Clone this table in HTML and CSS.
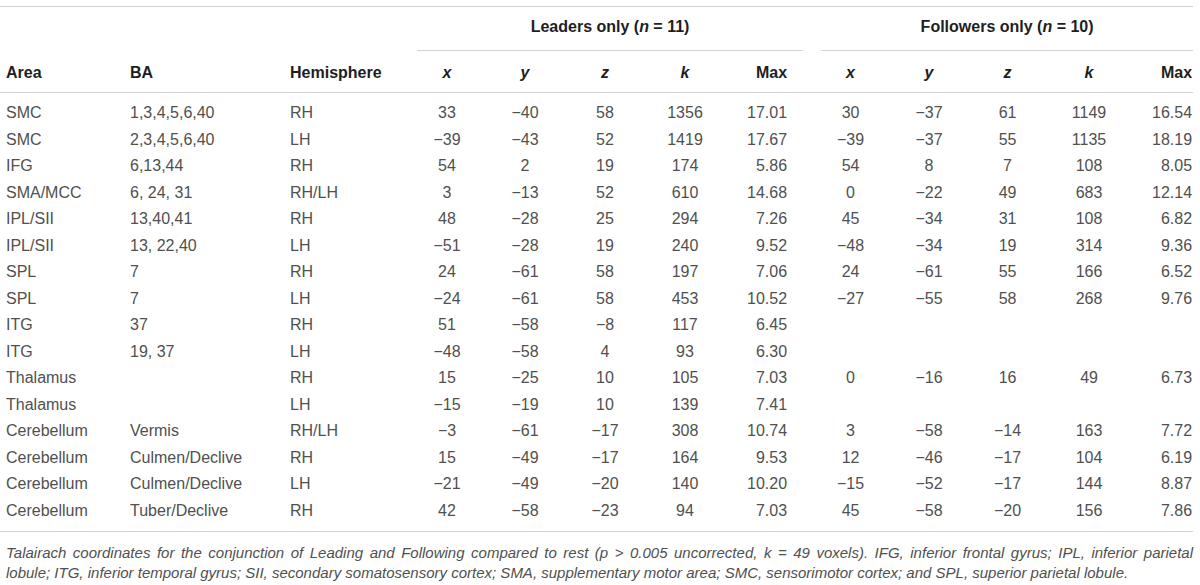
FILE: index.html
```html
<!DOCTYPE html>
<html lang="en">
<head>
<meta charset="utf-8">
<title>Talairach coordinates table</title>
<link rel="stylesheet" href="styles.css">
</head>
<body>
<div class="wrap">
<table class="tbl">
<colgroup>
<col class="c-area"><col class="c-ba"><col class="c-hem">
<col class="c-l1"><col class="c-l2"><col class="c-l3"><col class="c-l4"><col class="c-l5">
<col class="c-f1"><col class="c-f2"><col class="c-f3"><col class="c-f4"><col class="c-f5">
</colgroup>
<thead>
<tr class="grp">
<th colspan="3"></th>
<th colspan="5"><div class="grp-label grp-lead">Leaders only (<i>n</i> = 11)</div></th>
<th colspan="5"><div class="grp-label grp-foll">Followers only (<i>n</i> = 10)</div></th>
</tr>
<tr class="cols">
<th class="txt first">Area</th><th class="txt">BA</th><th class="txt">Hemisphere</th>
<th><i>x</i></th><th><i>y</i></th><th><i>z</i></th><th><i>k</i></th><th class="mx ml">Max</th>
<th><i>x</i></th><th><i>y</i></th><th><i>z</i></th><th><i>k</i></th><th class="mx mf">Max</th>
</tr>
</thead>
<tbody>
<tr><td class="txt first">SMC</td><td class="txt">1,3,4,5,6,40</td><td class="txt">RH</td><td>33</td><td>&minus;40</td><td>58</td><td>1356</td><td class="mx ml">17.01</td><td>30</td><td>&minus;37</td><td>61</td><td>1149</td><td class="mx mf">16.54</td></tr>
<tr><td class="txt first">SMC</td><td class="txt">2,3,4,5,6,40</td><td class="txt">LH</td><td>&minus;39</td><td>&minus;43</td><td>52</td><td>1419</td><td class="mx ml">17.67</td><td>&minus;39</td><td>&minus;37</td><td>55</td><td>1135</td><td class="mx mf">18.19</td></tr>
<tr><td class="txt first">IFG</td><td class="txt">6,13,44</td><td class="txt">RH</td><td>54</td><td>2</td><td>19</td><td>174</td><td class="mx ml">5.86</td><td>54</td><td>8</td><td>7</td><td>108</td><td class="mx mf">8.05</td></tr>
<tr><td class="txt first">SMA/MCC</td><td class="txt">6, 24, 31</td><td class="txt">RH/LH</td><td>3</td><td>&minus;13</td><td>52</td><td>610</td><td class="mx ml">14.68</td><td>0</td><td>&minus;22</td><td>49</td><td>683</td><td class="mx mf">12.14</td></tr>
<tr><td class="txt first">IPL/SII</td><td class="txt">13,40,41</td><td class="txt">RH</td><td>48</td><td>&minus;28</td><td>25</td><td>294</td><td class="mx ml">7.26</td><td>45</td><td>&minus;34</td><td>31</td><td>108</td><td class="mx mf">6.82</td></tr>
<tr><td class="txt first">IPL/SII</td><td class="txt">13, 22,40</td><td class="txt">LH</td><td>&minus;51</td><td>&minus;28</td><td>19</td><td>240</td><td class="mx ml">9.52</td><td>&minus;48</td><td>&minus;34</td><td>19</td><td>314</td><td class="mx mf">9.36</td></tr>
<tr><td class="txt first">SPL</td><td class="txt">7</td><td class="txt">RH</td><td>24</td><td>&minus;61</td><td>58</td><td>197</td><td class="mx ml">7.06</td><td>24</td><td>&minus;61</td><td>55</td><td>166</td><td class="mx mf">6.52</td></tr>
<tr><td class="txt first">SPL</td><td class="txt">7</td><td class="txt">LH</td><td>&minus;24</td><td>&minus;61</td><td>58</td><td>453</td><td class="mx ml">10.52</td><td>&minus;27</td><td>&minus;55</td><td>58</td><td>268</td><td class="mx mf">9.76</td></tr>
<tr><td class="txt first">ITG</td><td class="txt">37</td><td class="txt">RH</td><td>51</td><td>&minus;58</td><td>&minus;8</td><td>117</td><td class="mx ml">6.45</td><td></td><td></td><td></td><td></td><td class="mx mf"></td></tr>
<tr><td class="txt first">ITG</td><td class="txt">19, 37</td><td class="txt">LH</td><td>&minus;48</td><td>&minus;58</td><td>4</td><td>93</td><td class="mx ml">6.30</td><td></td><td></td><td></td><td></td><td class="mx mf"></td></tr>
<tr><td class="txt first">Thalamus</td><td class="txt"></td><td class="txt">RH</td><td>15</td><td>&minus;25</td><td>10</td><td>105</td><td class="mx ml">7.03</td><td>0</td><td>&minus;16</td><td>16</td><td>49</td><td class="mx mf">6.73</td></tr>
<tr><td class="txt first">Thalamus</td><td class="txt"></td><td class="txt">LH</td><td>&minus;15</td><td>&minus;19</td><td>10</td><td>139</td><td class="mx ml">7.41</td><td></td><td></td><td></td><td></td><td class="mx mf"></td></tr>
<tr><td class="txt first">Cerebellum</td><td class="txt">Vermis</td><td class="txt">RH/LH</td><td>&minus;3</td><td>&minus;61</td><td>&minus;17</td><td>308</td><td class="mx ml">10.74</td><td>3</td><td>&minus;58</td><td>&minus;14</td><td>163</td><td class="mx mf">7.72</td></tr>
<tr><td class="txt first">Cerebellum</td><td class="txt">Culmen/Declive</td><td class="txt">RH</td><td>15</td><td>&minus;49</td><td>&minus;17</td><td>164</td><td class="mx ml">9.53</td><td>12</td><td>&minus;46</td><td>&minus;17</td><td>104</td><td class="mx mf">6.19</td></tr>
<tr><td class="txt first">Cerebellum</td><td class="txt">Culmen/Declive</td><td class="txt">LH</td><td>&minus;21</td><td>&minus;49</td><td>&minus;20</td><td>140</td><td class="mx ml">10.20</td><td>&minus;15</td><td>&minus;52</td><td>&minus;17</td><td>144</td><td class="mx mf">8.87</td></tr>
<tr><td class="txt first">Cerebellum</td><td class="txt">Tuber/Declive</td><td class="txt">RH</td><td>42</td><td>&minus;58</td><td>&minus;23</td><td>94</td><td class="mx ml">7.03</td><td>45</td><td>&minus;58</td><td>&minus;20</td><td>156</td><td class="mx mf">7.86</td></tr>
</tbody>
</table>
<p class="note"><span class="note-line note-first">Talairach coordinates for the conjunction of Leading and Following compared to rest (p &gt; 0.005 uncorrected, k = 49 voxels). IFG, inferior frontal gyrus; IPL, inferior parietal</span> <span class="note-line">lobule; ITG, inferior temporal gyrus; SII, secondary somatosensory cortex; SMA, supplementary motor area; SMC, sensorimotor cortex; and SPL, superior parietal lobule.</span></p>
</div>
</body>
</html>
```

FILE: styles.css
```css
html, body {
  margin: 0;
  padding: 0;
  background: #ffffff;
}

body {
  font-family: "Liberation Sans", Arial, Helvetica, sans-serif;
  color: #505050;
  font-size: 16px;
}

.wrap {
  width: 1193px;
  padding-top: 6px;
}

.tbl {
  width: 1193px;
  table-layout: fixed;
  border-collapse: collapse;
  border-top: 1px solid #d2d2d2;
}

.c-area { width: 125px; }
.c-ba { width: 160px; }
.c-hem { width: 124px; }
.c-l1 { width: 76px; }
.c-l2 { width: 80px; }
.c-l3 { width: 80px; }
.c-l4 { width: 80px; }
.c-l5 { width: 86px; }
.c-f1 { width: 79px; }
.c-f2 { width: 78px; }
.c-f3 { width: 79px; }
.c-f4 { width: 84px; }
.c-f5 { width: 62px; }

.tbl th,
.tbl td {
  padding: 0;
  text-align: center;
  white-space: nowrap;
}

.tbl th {
  color: #1e1e1e;
  font-weight: bold;
}

.grp th {
  vertical-align: bottom;
}

.grp-label {
  padding: 9px 0 12px;
  line-height: 22px;
  border-bottom: 1px solid #d2d2d2;
}

.grp-lead {
  margin: 0 8px;
}

.grp-foll {
  margin: 0 0 0 10px;
}

.cols th {
  padding: 13px 0 10px;
  line-height: 18px;
  border-bottom: 1px solid #d2d2d2;
}

.tbl td {
  line-height: 18px;
  padding-top: 4.25px;
  padding-bottom: 4.25px;
}

.tbl .txt {
  text-align: left;
  padding-left: 5px;
}

.tbl .txt.first {
  padding-left: 6px;
}

.tbl .mx {
  text-align: right;
}

.tbl .ml {
  padding-right: 24px;
}

.tbl .mf {
  padding-right: 1px;
}

.tbl tbody tr:first-child td {
  padding-top: 11px;
}

.tbl tbody tr:last-child td {
  padding-bottom: 11px;
  border-bottom: 1px solid #d2d2d2;
}

.note {
  margin: 11px 0 0;
  padding-left: 6px;
  font-style: italic;
  line-height: 20px;
  font-size: 15px;
  color: #505050;
}

.note-line {
  display: block;
  white-space: nowrap;
}

.note-first {
  text-align: justify;
  text-align-last: justify;
}
```
